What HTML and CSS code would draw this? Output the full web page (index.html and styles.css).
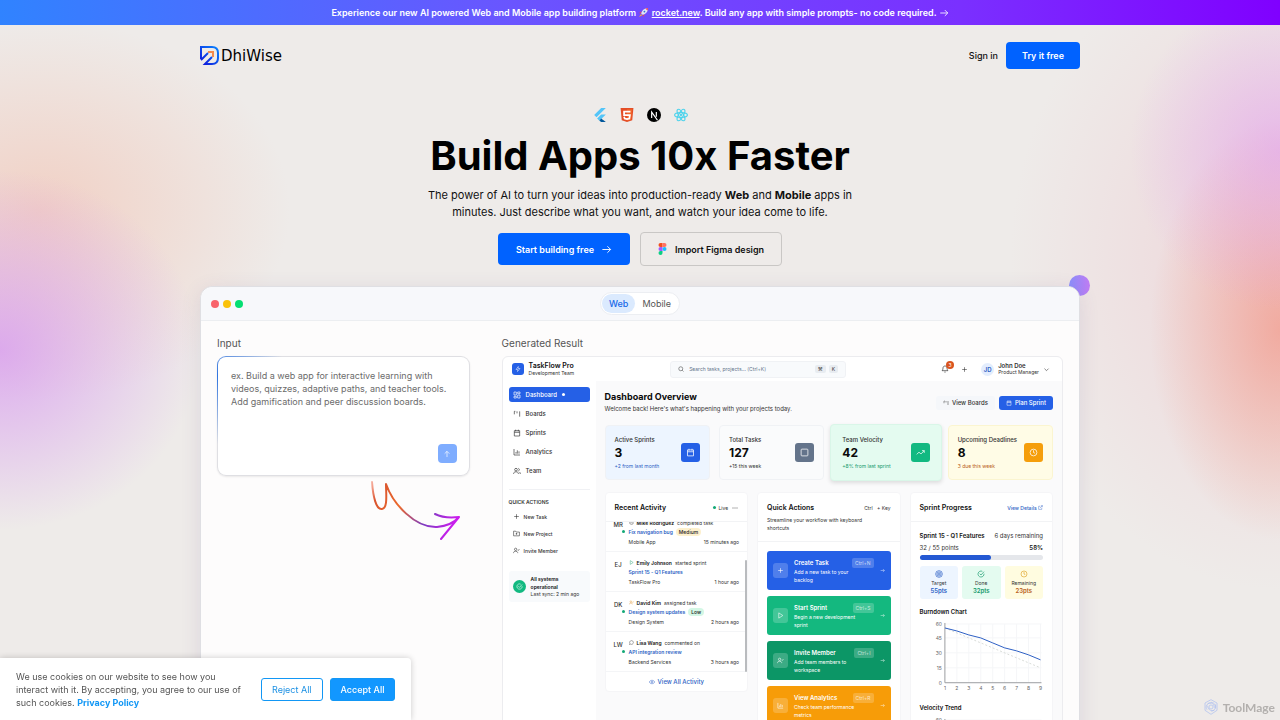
FILE: index.html
```html
<!DOCTYPE html>
<html lang="en">
<head>
  <meta charset="UTF-8">
  <meta name="viewport" content="width=device-width, initial-scale=1.0">
  <title>DhiWise - Build Apps 10x Faster</title>
  <link rel="stylesheet" href="styles.css">
</head>
<body>
  <!-- Shared icons -->
  <svg class="sprite" aria-hidden="true">
    <symbol id="arrow" viewBox="0 0 24 24"><path d="M3 12h18M14 5l7 7-7 7"/></symbol>
    <symbol id="up" viewBox="0 0 24 24"><path d="M12 21V4M5 11l7-7 7 7"/></symbol>
    <symbol id="plus" viewBox="0 0 24 24"><path d="M12 4v16M4 12h16"/></symbol>
    <symbol id="grid" viewBox="0 0 24 24"><path d="M3 3h7v9H3zM14 3h7v5h-7zM14 12h7v9h-7zM3 16h7v5H3z"/></symbol>
    <symbol id="boards" viewBox="0 0 24 24"><path d="M4 4v9M12 4v6M20 4v16M4 4h3"/></symbol>
    <symbol id="calendar" viewBox="0 0 24 24"><path d="M4 5h16v16H4zM4 10h16M8 2v5M16 2v5"/></symbol>
    <symbol id="chart" viewBox="0 0 24 24"><path d="M3 3v18h18M9 17v-5M13 17V7M18 17v-7"/></symbol>
    <symbol id="team" viewBox="0 0 24 24"><circle cx="9" cy="8" r="4"/><path d="M2 21v-2c0-6 14-6 14 0v2M16 4c4 1 4 7 0 8M19 15c2 1 3 3 3 6"/></symbol>
    <symbol id="invite" viewBox="0 0 24 24"><circle cx="9" cy="8" r="4"/><path d="M2 21v-2c0-6 14-6 14 0v2M16 10l2 2 4-5"/></symbol>
    <symbol id="folder" viewBox="0 0 24 24"><path d="M2 4h7l2 3h11v13H2zM12 10v6M9 13h6"/></symbol>
    <symbol id="check" viewBox="0 0 24 24"><path d="M21 11a9 9 0 1 1-5-7M8 11l4 4 9-10"/></symbol>
    <symbol id="clock" viewBox="0 0 24 24"><circle cx="12" cy="12" r="9"/><path d="M12 6v6l4 2"/></symbol>
    <symbol id="target" viewBox="0 0 24 24"><circle cx="12" cy="12" r="10"/><circle cx="12" cy="12" r="6"/><circle cx="12" cy="12" r="2"/></symbol>
    <symbol id="square" viewBox="0 0 24 24"><rect x="3" y="3" width="18" height="18" rx="2"/></symbol>
    <symbol id="trend" viewBox="0 0 24 24"><path d="M2 17l6-6 5 5 9-9M16 7h6v6"/></symbol>
    <symbol id="play" viewBox="0 0 24 24"><path d="M6 3l14 9-14 9z"/></symbol>
    <symbol id="comment" viewBox="0 0 24 24"><path d="M8 20a9 9 0 1 0-4-4l-2 6z"/></symbol>
    <symbol id="eye" viewBox="0 0 24 24"><path d="M1 12c5-9 17-9 22 0-5 9-17 9-22 0z"/><circle cx="12" cy="12" r="3"/></symbol>
    <symbol id="search" viewBox="0 0 24 24"><circle cx="11" cy="11" r="8"/><path d="M17 17l5 5"/></symbol>
    <symbol id="bell" viewBox="0 0 24 24"><path d="M6 9c0-8 12-8 12 0 0 6 3 8 3 8H3s3-2 3-8M10 21c1 1 3 1 4 0"/></symbol>
    <symbol id="chevron" viewBox="0 0 24 24"><path d="M5 9l7 7 7-7"/></symbol>
    <symbol id="external" viewBox="0 0 24 24"><path d="M18 13v8H3V6h8M14 3h7v7M10 14L21 3"/></symbol>
    <symbol id="bolt" viewBox="0 0 24 24"><path d="M13 2L4 14h7l-1 8 10-12h-7z"/></symbol>
    <symbol id="dots" viewBox="0 0 24 24"><path d="M2 12h4M10 12h4M18 12h4"/></symbol>
  </svg>

  <div class="banner">
    <p>Experience our new AI powered Web and Mobile app building platform
      <svg class="rocket" viewBox="0 0 24 24"><path fill="#e4405f" d="M8 9L2 13l5 1zM15 16l-4 6-1-5z"/><path fill="#dfe6f5" d="M7 14C9 7 14 2 22 2c0 8-5 13-12 15z"/><path fill="#e4405f" d="M16 3l6-1-1 6z"/><circle cx="14" cy="10" r="2" fill="#3b6fd4"/><path fill="#ffb02e" d="M7 15l-5 7 7-4z"/></svg>
      <a href="#">rocket.new</a>. Build any app with simple prompts- no code required.
      <svg class="icon banner-arrow"><use href="#arrow"/></svg></p>
  </div>

  <header class="header">
    <a href="#" class="logo">
      <svg viewBox="0 0 19 19"><defs><linearGradient id="logoFill" x1="0" y1="1" x2="1" y2="0"><stop offset="0" stop-color="#1013d8"/><stop offset="1" stop-color="#0a84ff"/></linearGradient></defs><path d="M1 13V1h11c4 0 6 2 6 6v5c0 4-2 6-6 6H5l7-7M1 14l7-7" fill="none" stroke="url(#logoFill)" stroke-width="2"/><path d="M8 6h5v5" fill="none" stroke="#f58a4b" stroke-width="2"/></svg>
      <span>DhiWise</span>
    </a>
    <nav class="nav">
      <a href="#">Sign in</a>
      <a href="#" class="btn try">Try it free</a>
    </nav>
  </header>

  <main>
    <section class="hero">
      <div class="tech">
        <svg viewBox="0 0 24 24"><path fill="#54c5f8" d="M14 0L2 12l4 4L22 0zM14 11l-7 7 4 4 11-11z"/><path fill="#01579b" d="M11 22l3-4 8 6h-8z"/></svg>
        <svg viewBox="0 0 24 24"><path fill="#e44d26" d="M1 0h22l-2 21-9 3-9-3z"/><path fill="#f16529" d="M12 2h9l-2 18-7 2z"/><path fill="none" stroke="#fff" stroke-width="3" d="M18 6H7v6h10l-1 6-4 1-4-1-1-3"/></svg>
        <svg viewBox="0 0 24 24"><circle cx="12" cy="12" r="12"/><path fill="none" stroke="#fff" stroke-width="2" d="M8 17V7l10 14M16 7v8"/></svg>
        <svg viewBox="0 0 24 24" class="react"><ellipse cx="12" cy="12" rx="11" ry="4"/><ellipse cx="12" cy="12" rx="11" ry="4" transform="rotate(60 12 12)"/><ellipse cx="12" cy="12" rx="11" ry="4" transform="rotate(120 12 12)"/><circle cx="12" cy="12" r="1"/></svg>
      </div>
      <h1>Build Apps 10x Faster</h1>
      <p>The power of AI to turn your ideas into production-ready <b>Web</b> and <b>Mobile</b> apps in minutes. Just describe what you want, and watch your idea come to life.</p>
      <div class="hero-buttons">
        <a href="#" class="btn start">Start building free <svg class="icon"><use href="#arrow"/></svg></a>
        <a href="#" class="btn figma">
          <svg viewBox="0 0 16 24"><path fill="#f24e1e" d="M8 0H4a4 4 0 0 0 0 8h4z"/><path fill="#ff7262" d="M8 0h4a4 4 0 0 1 0 8H8z"/><path fill="#a259ff" d="M8 8H4a4 4 0 0 0 0 8h4z"/><circle cx="12" cy="12" r="4" fill="#1abcfe"/><path fill="#0acf83" d="M8 16H4a4 4 0 1 0 4 4z"/></svg>
          Import Figma design</a>
      </div>
    </section>

    <section class="showcase">
      <div class="orb"></div>
      <div class="window">
        <div class="window-bar">
          <div class="lights"><i class="red"></i><i class="yellow"></i><i class="green"></i></div>
          <div class="tabs">
            <button class="active">Web</button>
            <button>Mobile</button>
          </div>
        </div>

        <div class="window-body">
          <div class="input-side">
            <label for="prompt" class="side-label">Input</label>
            <div class="prompt-box">
              <textarea id="prompt" placeholder="ex. Build a web app for interactive learning with videos, quizzes, adaptive paths, and teacher tools. Add gamification and peer discussion boards."></textarea>
              <button class="send" aria-label="Send"><svg class="icon"><use href="#up"/></svg></button>
            </div>
            <svg class="swoosh" viewBox="0 0 100 70">
              <defs><linearGradient id="swooshFill" gradientUnits="userSpaceOnUse" x1="5" y1="0" x2="94" y2="42"><stop offset="0" stop-color="#f5512f" stop-opacity="0.2"/><stop offset="0.15" stop-color="#d9552f"/><stop offset="0.4" stop-color="#ec6a2c"/><stop offset="0.7" stop-color="#7d3cc0"/><stop offset="1" stop-color="#cf1cf0"/></linearGradient></defs>
              <path d="M7 6C8 20 11 34 17 33C23 32 21 18 21 8C28 28 50 52 72 51C82 50 89 47 94 41M70 38C78 42 86 42 94 41L76 63"/>
            </svg>
          </div>

          <div class="result-side">
            <p class="side-label">Generated Result</p>
            <div class="app">
              <div class="topbar">
                <div class="brand">
                  <span class="brand-icon"><svg class="icon"><use href="#bolt"/></svg></span>
                  <div><strong>TaskFlow Pro</strong><small>Development Team</small></div>
                </div>
                <div class="search">
                  <svg class="icon"><use href="#search"/></svg>
                  <input type="text" aria-label="Search" placeholder="Search tasks, projects... (Ctrl+K)">
                  <kbd>⌘</kbd><kbd>K</kbd>
                </div>
                <div class="user">
                  <span class="bell"><svg class="icon"><use href="#bell"/></svg><em>3</em></span>
                  <svg class="icon"><use href="#plus"/></svg>
                  <span class="avatar">JD</span>
                  <div><strong>John Doe</strong><small>Product Manager</small></div>
                  <svg class="icon"><use href="#chevron"/></svg>
                </div>
              </div>

              <div class="app-body">
                <aside class="sidebar">
                  <nav class="menu">
                    <a href="#" class="current"><svg class="icon"><use href="#grid"/></svg>Dashboard<i></i></a>
                    <a href="#"><svg class="icon"><use href="#boards"/></svg>Boards</a>
                    <a href="#"><svg class="icon"><use href="#calendar"/></svg>Sprints</a>
                    <a href="#"><svg class="icon"><use href="#chart"/></svg>Analytics</a>
                    <a href="#"><svg class="icon"><use href="#team"/></svg>Team</a>
                  </nav>
                  <div class="quick">
                    <h4>QUICK ACTIONS</h4>
                    <a href="#"><svg class="icon"><use href="#plus"/></svg>New Task</a>
                    <a href="#"><svg class="icon"><use href="#folder"/></svg>New Project</a>
                    <a href="#"><svg class="icon"><use href="#invite"/></svg>Invite Member</a>
                  </div>
                  <div class="system">
                    <span><svg class="icon"><use href="#check"/></svg></span>
                    <div><strong>All systems operational</strong><small>Last sync: 2 min ago</small></div>
                  </div>
                </aside>

                <div class="content">
                  <div class="content-head">
                    <div>
                      <h2>Dashboard Overview</h2>
                      <p>Welcome back! Here's what's happening with your projects today.</p>
                    </div>
                    <div class="head-buttons">
                      <button><svg class="icon"><use href="#boards"/></svg>View Boards</button>
                      <button class="plan"><svg class="icon"><use href="#calendar"/></svg>Plan Sprint</button>
                    </div>
                  </div>

                  <div class="stats">
                    <div class="stat blue"><div><span>Active Sprints</span><b>3</b><small>+2 from last month</small></div><i><svg class="icon"><use href="#calendar"/></svg></i></div>
                    <div class="stat gray"><div><span>Total Tasks</span><b>127</b><small>+15 this week</small></div><i><svg class="icon"><use href="#square"/></svg></i></div>
                    <div class="stat mint"><div><span>Team Velocity</span><b>42</b><small>+8% from last sprint</small></div><i><svg class="icon"><use href="#trend"/></svg></i></div>
                    <div class="stat amber"><div><span>Upcoming Deadlines</span><b>8</b><small>3 due this week</small></div><i><svg class="icon"><use href="#clock"/></svg></i></div>
                  </div>

                  <div class="panels">
                    <!-- Recent activity -->
                    <div class="panel">
                      <div class="panel-head"><h3>Recent Activity</h3><span class="live"><i></i>Live <svg class="icon"><use href="#dots"/></svg></span></div>
                      <div class="activity">
                        <div class="item">
                          <span class="who">MR</span>
                          <div>
                            <p><svg class="icon"><use href="#check"/></svg><b>Mike Rodriguez</b> completed task</p>
                            <p><a href="#">Fix navigation bug</a><mark class="medium">Medium</mark></p>
                            <p class="meta"><span>Mobile App</span><span>15 minutes ago</span></p>
                          </div>
                        </div>
                        <div class="item">
                          <span class="who off">EJ</span>
                          <div>
                            <p><svg class="icon play"><use href="#play"/></svg><b>Emily Johnson</b> started sprint</p>
                            <p><a href="#">Sprint 15 - Q1 Features</a></p>
                            <p class="meta"><span>TaskFlow Pro</span><span>1 hour ago</span></p>
                          </div>
                        </div>
                        <div class="item">
                          <span class="who">DK</span>
                          <div>
                            <p><svg class="icon assign"><use href="#invite"/></svg><b>David Kim</b> assigned task</p>
                            <p><a href="#">Design system updates</a><mark class="low">Low</mark></p>
                            <p class="meta"><span>Design System</span><span>2 hours ago</span></p>
                          </div>
                        </div>
                        <div class="item">
                          <span class="who">LW</span>
                          <div>
                            <p><svg class="icon"><use href="#comment"/></svg><b>Lisa Wang</b> commented on</p>
                            <p><a href="#">API integration review</a></p>
                            <p class="meta"><span>Backend Services</span><span>3 hours ago</span></p>
                          </div>
                        </div>
                        <div class="thumb"></div>
                      </div>
                      <a href="#" class="view-all"><svg class="icon"><use href="#eye"/></svg>View All Activity</a>
                    </div>

                    <!-- Quick actions -->
                    <div class="panel">
                      <div class="panel-head">
                        <h3>Quick Actions</h3><span><kbd>Ctrl</kbd> + Key</span>
                        <p>Streamline your workflow with keyboard shortcuts</p>
                      </div>
                      <div class="actions">
                        <button class="create"><i><svg class="icon"><use href="#plus"/></svg></i><span><b>Create Task <kbd>Ctrl+N</kbd></b><small>Add a new task to your backlog</small></span><svg class="icon"><use href="#arrow"/></svg></button>
                        <button class="sprint"><i><svg class="icon"><use href="#play"/></svg></i><span><b>Start Sprint <kbd>Ctrl+S</kbd></b><small>Begin a new development sprint</small></span><svg class="icon"><use href="#arrow"/></svg></button>
                        <button class="member"><i><svg class="icon"><use href="#invite"/></svg></i><span><b>Invite Member <kbd>Ctrl+I</kbd></b><small>Add team members to workspace</small></span><svg class="icon"><use href="#arrow"/></svg></button>
                        <button class="analytics"><i><svg class="icon"><use href="#chart"/></svg></i><span><b>View Analytics <kbd>Ctrl+R</kbd></b><small>Check team performance metrics</small></span><svg class="icon"><use href="#arrow"/></svg></button>
                      </div>
                    </div>

                    <!-- Sprint progress -->
                    <div class="panel">
                      <div class="panel-head"><h3>Sprint Progress</h3><a href="#">View Details <svg class="icon"><use href="#external"/></svg></a></div>
                      <div class="progress">
                        <p class="row name"><b>Sprint 15 - Q1 Features</b><span>6 days remaining</span></p>
                        <p class="row"><span>32 / 55 points</span><b>58%</b></p>
                        <div class="bar"><div style="width: 58%"></div></div>
                        <div class="tiles">
                          <div class="t-blue"><svg class="icon"><use href="#target"/></svg>Target<b>55pts</b></div>
                          <div class="t-green"><svg class="icon"><use href="#check"/></svg>Done<b>32pts</b></div>
                          <div class="t-amber"><svg class="icon"><use href="#clock"/></svg>Remaining<b>23pts</b></div>
                        </div>
                        <h4>Burndown Chart</h4>
                        <svg class="graph" viewBox="0 0 124 76">
                          <path class="gridlines" d="M25 5h97M25 19h97M25 34h97M25 49h97M37 5v59M49 5v59M61 5v59M73 5v59M85 5v59M97 5v59M109 5v59M121 5v59"/>
                          <path class="axis" d="M25 4v60h97"/>
                          <path class="ideal" d="M25 9L121 49"/>
                          <path class="actual" d="M25 9L37 12L49 16L61 19L73 24L85 29L97 32L109 36L121 41"/>
                          <g text-anchor="end"><text x="22" y="7">60</text><text x="22" y="21">45</text><text x="22" y="36">30</text><text x="22" y="51">15</text><text x="22" y="66">0</text></g>
                          <g text-anchor="middle"><text x="25" y="71">1</text><text x="37" y="71">2</text><text x="49" y="71">3</text><text x="61" y="71">4</text><text x="73" y="71">5</text><text x="85" y="71">6</text><text x="97" y="71">7</text><text x="109" y="71">8</text><text x="121" y="71">9</text></g>
                        </svg>
                        <h4>Velocity Trend</h4>
                        <svg class="graph" viewBox="0 0 124 76">
                          <path class="gridlines" d="M25 5h97M25 19h97M25 34h97M25 49h97"/>
                          <path class="axis" d="M25 4v60h97"/>
                          <g text-anchor="end"><text x="22" y="7">60</text><text x="22" y="21">45</text><text x="22" y="36">30</text><text x="22" y="51">15</text><text x="22" y="66">0</text></g>
                        </svg>
                      </div>
                    </div>
                  </div>
                </div>
              </div>
            </div>
          </div>
        </div>
      </div>
    </section>
  </main>

  <div class="cookies">
    <p>We use cookies on our website to see how you interact with it. By accepting, you agree to our use of such cookies. <a href="#">Privacy Policy</a></p>
    <button class="reject">Reject All</button>
    <button class="accept">Accept All</button>
  </div>

  <div class="toolmage">
    <svg viewBox="0 0 24 24"><circle cx="12" cy="12" r="3"/><path d="M12 1l9 5v11l-9 6-9-6V6zM12 5c5 0 8 5 6 9M18 8c3 5-1 10-6 10M17 17c-6 2-10-2-10-7M6 16C3 11 6 6 12 6M7 7c5-3 10 0 10 6"/></svg>
    ToolMage
  </div>
</body>
</html>
```

FILE: styles.css
```css
* {
  box-sizing: border-box;
}

body {
  margin: 0;
  font-family: Inter, "Liberation Sans", sans-serif;
  font-size: 9px;
  color: #111;
  overflow-x: hidden;
  background:
    radial-gradient(ellipse 200px 180px at 0 350px, rgba(214, 150, 240, 0.75), transparent),
    radial-gradient(ellipse 250px 190px at 40px 210px, rgba(243, 190, 172, 0.6), transparent),
    radial-gradient(ellipse 150px 160px at 100% 150px, rgba(226, 160, 240, 0.6), transparent),
    radial-gradient(ellipse 130px 210px at 100% 330px, rgba(243, 140, 120, 0.6), transparent),
    radial-gradient(ellipse 270px 330px at 100% 260px, rgba(238, 190, 200, 0.5), transparent),
    #eeebe9;
}

h1, h2, h3, h4, p {
  margin: 0;
}

a {
  color: inherit;
  text-decoration: none;
}

button {
  font-family: inherit;
  border: none;
  cursor: pointer;
}

strong, small {
  display: block;
}

.sprite {
  display: none;
}

.icon {
  width: 8px;
  height: 8px;
  flex-shrink: 0;
  fill: none;
  stroke: currentColor;
  stroke-width: 2;
}

/* Banner */
.banner {
  height: 25px;
  background: linear-gradient(90deg, #3083ff, #6a55ff 40%, #7a30ff 75%, #8000ff);
  color: white;
  font-weight: 600;
  line-height: 25px;
  text-align: center;
}

.banner a {
  text-decoration: underline;
}

.rocket {
  width: 11px;
  height: 11px;
  vertical-align: -2px;
}

.banner-arrow {
  width: 10px;
  height: 10px;
  vertical-align: -2px;
}

/* Header */
.header {
  max-width: 880px;
  margin: 0 auto;
  padding-top: 17px;
  display: flex;
  justify-content: space-between;
  align-items: center;
}

.logo {
  display: flex;
  align-items: center;
  gap: 2px;
  font-family: "DejaVu Sans", sans-serif;
  font-size: 15px;
  color: black;
}

.logo svg {
  width: 19px;
  height: 19px;
}

.nav {
  display: flex;
  align-items: center;
  gap: 8px;
  font-weight: 500;
}

.btn {
  display: flex;
  align-items: center;
  justify-content: center;
  border-radius: 4px;
  font-weight: 600;
}

.try {
  height: 27px;
  padding: 0 16px;
  background: #0062ff;
  color: white;
}

/* Hero */
.hero {
  display: flex;
  flex-direction: column;
  align-items: center;
  padding-top: 39px;
  text-align: center;
}

.tech {
  display: flex;
  gap: 13px;
}

.tech svg {
  width: 14px;
  height: 14px;
}

.react {
  fill: none;
  stroke: #4fd3ec;
  stroke-width: 2;
}

.hero h1 {
  margin-top: 10px;
  font-size: 40px;
  line-height: 48px;
  font-weight: 700;
  color: black;
}

.hero p {
  max-width: 430px;
  margin-top: 7px;
  font-size: 11px;
  line-height: 17px;
}

.hero-buttons {
  display: flex;
  align-items: center;
  gap: 10px;
  margin-top: 11px;
}

.start {
  height: 32px;
  padding: 0 18px;
  gap: 7px;
  background: #0062ff;
  color: white;
}

.start .icon {
  width: 11px;
  height: 11px;
}

.figma {
  height: 34px;
  padding: 0 17px;
  gap: 8px;
  border: 1px solid #c9c7c5;
}

.figma svg {
  width: 9px;
  height: 12px;
}

/* App window */
.showcase {
  position: relative;
  max-width: 880px;
  margin: 20px auto 0;
}

.orb {
  position: absolute;
  top: -11px;
  right: -10px;
  width: 21px;
  height: 21px;
  border-radius: 50%;
  background: linear-gradient(90deg, #8b8ffa, #c07cf3);
}

.window {
  position: relative;
  border: 1px solid #dfdfe3;
  border-radius: 12px 12px 0 0;
  background: #fdfcfc;
  box-shadow: 0 4px 20px rgba(90, 60, 120, 0.12);
}

.window-bar {
  display: grid;
  grid-template-columns: 1fr auto 1fr;
  align-items: center;
  height: 34px;
  padding: 0 10px;
  border-bottom: 1px solid #eceef1;
  border-radius: 12px 12px 0 0;
  background: #f7f8fb;
}

.lights {
  display: flex;
  gap: 4px;
}

.lights i {
  width: 8px;
  height: 8px;
  border-radius: 50%;
}

.red {
  background: #f8636b;
}

.yellow {
  background: #fac20a;
}

.green {
  background: #05df72;
}

.tabs {
  display: flex;
  padding: 1px;
  border: 1px solid #eceef2;
  border-radius: 12px;
  background: white;
}

.tabs button {
  height: 19px;
  padding: 0 7px;
  border-radius: 10px;
  background: none;
  font-size: 9px;
  color: #555;
}

.tabs .active {
  background: #dbeafe;
  color: #1668e8;
  font-weight: 500;
}

.window-body {
  display: grid;
  grid-template-columns: 9fr 20fr;
  gap: 32px;
  padding: 16px;
}

.input-side {
  display: flex;
  flex-direction: column;
}

.side-label {
  line-height: 12px;
  margin-bottom: 7px;
  font-size: 10px;
  color: #555;
}

.prompt-box {
  display: flex;
  flex-direction: column;
  height: 120px;
  padding: 12px;
  border: 1px solid transparent;
  border-radius: 9px;
  background:
    linear-gradient(white, white) padding-box,
    radial-gradient(circle 68px at 0 20px, #2f74e0, transparent) border-box,
    linear-gradient(#dfdfe3, #dfdfe3) border-box;
  box-shadow: 0 1px 2px rgba(0, 0, 0, 0.08);
}

.prompt-box textarea {
  flex: 1;
  padding: 0 0 0 1px;
  border: none;
  outline: none;
  resize: none;
  background: none;
  font-family: inherit;
  font-size: 9px;
  line-height: 13px;
  overflow: hidden;
}

.prompt-box textarea::placeholder {
  color: #6b6b6b;
}

.send {
  display: flex;
  align-items: center;
  justify-content: center;
  align-self: flex-end;
  width: 19px;
  height: 19px;
  border-radius: 4px;
  background: #7fadff;
  color: white;
}

.swoosh {
  width: 100px;
  height: 70px;
  align-self: flex-end;
  margin-right: 5px;
  fill: none;
  stroke: url(#swooshFill);
  stroke-width: 2;
  stroke-linecap: round;
  stroke-linejoin: round;
}

/* Generated dashboard */
.app {
  border: 1px solid #ececef;
  border-radius: 6px;
  background: white;
  font-size: 5px;
  color: #333;
  overflow: hidden;
}

.topbar {
  display: grid;
  grid-template-columns: 7fr 176px 9fr;
  align-items: center;
  height: 24px;
  padding: 0 12px 0 9px;
}

.brand {
  display: flex;
  align-items: center;
  gap: 5px;
}

.brand-icon {
  display: flex;
  padding: 3px;
  border-radius: 3px;
  background: #2560e6;
  color: white;
}

.brand-icon .icon {
  width: 6px;
  height: 6px;
}

.brand strong {
  font-size: 7px;
  line-height: 9px;
  font-weight: 600;
  color: #111;
}

.brand small,
.user small {
  font-size: 5px;
  line-height: 7px;
}

.search {
  display: flex;
  align-items: center;
  gap: 3px;
  height: 17px;
  padding: 0 7px;
  border: 1px solid #f0f2f5;
  border-radius: 3px;
  background: #f8fafc;
}

.search .icon {
  width: 6px;
  height: 6px;
}

.search input {
  flex: 1;
  min-width: 0;
  padding: 0 2px;
  border: none;
  background: none;
  font-family: inherit;
  font-size: 5px;
}

.search input::placeholder {
  color: #64748b;
}

.search kbd {
  padding: 1px 3px;
  border-radius: 2px;
  background: #e8ecf1;
  font-family: inherit;
  font-size: 5px;
}

.user {
  display: flex;
  align-items: center;
  justify-content: flex-end;
  gap: 4px;
}

.user strong {
  font-size: 6px;
  line-height: 7px;
  font-weight: 600;
}

.user > .icon {
  width: 7px;
  height: 7px;
}

.bell {
  position: relative;
  display: flex;
  margin-right: 8px;
}

.bell em {
  position: absolute;
  top: -4px;
  right: -5px;
  width: 8px;
  height: 8px;
  border-radius: 50%;
  background: #d9541e;
  color: white;
  font-style: normal;
  line-height: 8px;
  text-align: center;
}

.avatar {
  width: 13px;
  height: 13px;
  margin-left: 9px;
  border-radius: 50%;
  background: #e3edfd;
  color: #2c5fc4;
  font-size: 6px;
  font-weight: 600;
  line-height: 13px;
  text-align: center;
}

.app-body {
  display: grid;
  grid-template-columns: 93px 1fr;
}

.sidebar {
  padding-top: 6px;
}

.menu,
.quick {
  display: flex;
  flex-direction: column;
  margin: 0 6px;
}

.menu {
  gap: 4px;
  padding-bottom: 11px;
  border-bottom: 1px solid #f0f1f4;
}

.menu a {
  display: flex;
  align-items: center;
  gap: 5px;
  height: 15px;
  padding-left: 4px;
  border-radius: 3px;
  font-size: 6px;
  font-weight: 500;
}

.menu .current {
  background: #2560e6;
  color: white;
}

.current i {
  width: 3px;
  height: 3px;
  border-radius: 50%;
  background: white;
}

.quick {
  padding: 9px 0 5px;
}

.quick h4 {
  line-height: 7px;
  margin-bottom: 2px;
  font-size: 5px;
  font-weight: 600;
}

.quick a {
  display: flex;
  align-items: center;
  gap: 4px;
  height: 17px;
  padding-left: 4px;
  font-weight: 500;
}

.quick .icon {
  width: 7px;
  height: 7px;
}

.system {
  display: flex;
  align-items: center;
  gap: 5px;
  margin: 7px 6px 0;
  padding: 4px;
  border-radius: 3px;
  background: #f8fafc;
}

.system span {
  display: flex;
  padding: 3px;
  border-radius: 50%;
  background: #12b981;
  color: white;
}

.system .icon {
  width: 7px;
  height: 7px;
}

.system strong {
  max-width: 40px;
  line-height: 8px;
  font-weight: 600;
  color: #111;
}

.system small {
  font-size: 5px;
  line-height: 7px;
}

.content {
  padding: 9px;
  background: #fafafb;
}

.content-head {
  display: flex;
  align-items: center;
  justify-content: space-between;
}

.content-head h2 {
  font-size: 9px;
  line-height: 13px;
  font-weight: 700;
  color: #0a0a0a;
}

.content-head p {
  font-size: 6px;
  line-height: 12px;
}

.head-buttons {
  display: flex;
  gap: 4px;
}

.head-buttons button {
  display: flex;
  align-items: center;
  gap: 3px;
  height: 14px;
  padding: 0 7px;
  border-radius: 3px;
  background: #f5f7fa;
  color: #333;
  font-size: 6px;
  font-weight: 500;
}

.head-buttons .icon {
  width: 6px;
  height: 6px;
}

.head-buttons .plan {
  background: #2560e6;
  color: white;
}

.stats {
  display: grid;
  grid-template-columns: repeat(4, 1fr);
  gap: 9px;
  margin-top: 10px;
}

.stat {
  display: flex;
  align-items: center;
  justify-content: space-between;
  height: 55px;
  padding: 0 9px;
  border: 1px solid #f0f2f5;
  border-radius: 4px;
  background: #fafbfc;
}

.stat span {
  display: block;
  font-size: 6px;
  line-height: 9px;
  font-weight: 500;
  white-space: nowrap;
}

.stat b {
  display: block;
  font-size: 12px;
  line-height: 18px;
  color: #0a0a0a;
}

.stat small {
  font-size: 5px;
  line-height: 8px;
  white-space: nowrap;
}

.stat > i {
  display: flex;
  padding: 5px;
  border-radius: 3px;
  color: white;
}

.stat > i .icon {
  width: 9px;
  height: 9px;
}

.stat.blue {
  background: #edf5ff;
}

.stat.blue i {
  background: #2560e6;
}

.stat.blue small {
  color: #2c5fc4;
}

.stat.gray i {
  background: #64748b;
}

.stat.mint {
  height: 57px;
  margin: -1px -3px;
  padding: 0 11px;
  background: #e4fbf0;
  border-color: #d9f6e8;
  box-shadow: 0 2px 4px rgba(0, 0, 0, 0.12);
}

.stat.mint i {
  background: #12b981;
}

.stat.mint small {
  color: #159a6c;
}

.stat.amber {
  background: #fffce6;
  border-color: #fbf5d0;
}

.stat.amber i {
  background: #f59e0b;
}

.stat.amber small {
  color: #b8601a;
}

.panels {
  display: grid;
  grid-template-columns: repeat(3, 1fr);
  align-items: start;
  gap: 9px;
  margin-top: 12px;
}

.panel {
  border: 1px solid #f5f5f7;
  border-radius: 4px;
  background: white;
}

.panel-head {
  display: flex;
  flex-wrap: wrap;
  align-items: center;
  justify-content: space-between;
  padding: 10px 9px 9px;
  border-bottom: 1px solid #f2f3f5;
}

.panel-head h3 {
  font-size: 7px;
  line-height: 9px;
  font-weight: 600;
  color: #111;
}

.panel-head a {
  color: #2c5fc4;
  font-weight: 500;
}

.panel-head a .icon {
  width: 5px;
  height: 5px;
}

.panel-head p {
  width: 100%;
  margin-top: 4px;
  padding-right: 16px;
  line-height: 8px;
}

.panel-head kbd {
  margin-right: 3px;
  font-family: inherit;
  font-size: 5px;
}

.live {
  display: flex;
  align-items: center;
  gap: 2px;
}

.live i {
  width: 3px;
  height: 3px;
  border-radius: 50%;
  background: #12a876;
}

.live .icon {
  width: 6px;
  margin-left: 2px;
  stroke-width: 3;
}

/* The list is scrolled to its end */
.activity {
  position: relative;
  display: flex;
  flex-direction: column;
  justify-content: flex-end;
  height: 150px;
  overflow: hidden;
}

.item {
  display: flex;
  flex-shrink: 0;
  gap: 5px;
  height: 40px;
  padding: 6px 8px 0 7px;
  border-bottom: 1px solid #f4f5f7;
}

.item > div {
  flex: 1;
}

.item p {
  display: flex;
  align-items: center;
  gap: 3px;
  height: 9px;
  white-space: nowrap;
}

.item .icon {
  width: 5px;
  height: 5px;
}

.item b {
  font-weight: 600;
  color: #111;
}

.item a {
  color: #2c5fc4;
  font-weight: 600;
}

.item .meta {
  justify-content: space-between;
  margin-top: 1px;
}

.item .play {
  color: #1d9b6c;
}

.item .assign {
  color: #e0922a;
}

.who {
  position: relative;
  width: 11px;
  height: 14px;
  font-size: 6px;
  font-weight: 500;
  line-height: 14px;
  text-align: center;
}

.who::after {
  content: "";
  position: absolute;
  right: -1px;
  bottom: -1px;
  width: 3px;
  height: 3px;
  border-radius: 50%;
  background: #12a876;
}

.who.off::after {
  display: none;
}

mark {
  padding: 1px 3px;
  border-radius: 4px;
  color: #222;
  font-weight: 500;
}

.medium {
  background: #fdf0cd;
}

.low {
  background: #d3f7e5;
}

.thumb {
  position: absolute;
  right: 0;
  bottom: 0;
  width: 2px;
  height: 112px;
  border-radius: 1px;
  background: #b9bbbe;
}

.view-all {
  display: flex;
  align-items: center;
  justify-content: center;
  gap: 3px;
  height: 19px;
  color: #2c5fc4;
  font-size: 6px;
  font-weight: 500;
}

.view-all .icon {
  width: 6px;
}

.actions {
  display: flex;
  flex-direction: column;
  gap: 6px;
  padding: 9px;
}

.actions button {
  display: flex;
  align-items: center;
  gap: 6px;
  height: 39px;
  padding: 0 6px;
  border-radius: 3px;
  color: white;
  font-size: 5px;
  text-align: left;
}

.actions i {
  display: flex;
  padding: 4px;
  border-radius: 3px;
  background: rgba(255, 255, 255, 0.2);
}

.actions i .icon {
  width: 7px;
  height: 7px;
}

.actions > button > .icon {
  width: 5px;
  height: 5px;
}

.actions span {
  flex: 1;
}

.actions small {
  padding-right: 10px;
  font-size: 5px;
  line-height: 8px;
}

.actions b {
  display: flex;
  align-items: center;
  justify-content: space-between;
  line-height: 10px;
  font-size: 6px;
  font-weight: 600;
}

.actions kbd {
  padding: 0 3px;
  border-radius: 2px;
  background: rgba(255, 255, 255, 0.2);
  color: rgba(255, 255, 255, 0.7);
  font-family: inherit;
  font-size: 5px;
  font-weight: 400;
}

.create {
  background: #2560e6;
}

.sprint {
  background: #14b87f;
}

.member {
  background: #0c9666;
}

.analytics {
  background: #f79c08;
}

.progress {
  padding: 9px;
}

.row {
  display: flex;
  justify-content: space-between;
  font-size: 6px;
  line-height: 9px;
  white-space: nowrap;
}

.row.name {
  margin-bottom: 3px;
}

.row b {
  font-weight: 600;
  color: #111;
}

.bar {
  height: 5px;
  margin-top: 3px;
  border-radius: 3px;
  background: #e5e7eb;
}

.bar div {
  height: 100%;
  border-radius: 3px;
  background: #2459d3;
}

.tiles {
  display: grid;
  grid-template-columns: repeat(3, 1fr);
  gap: 4px;
  margin-top: 6px;
}

.tiles div {
  display: flex;
  flex-direction: column;
  align-items: center;
  padding: 4px 0;
  border-radius: 3px;
  line-height: 7px;
}

.tiles b {
  font-size: 6px;
  font-weight: 600;
  line-height: 8px;
}

.tiles .icon {
  margin-bottom: 2px;
}

.t-blue {
  background: #edf5ff;
}

.t-blue b,
.t-blue .icon {
  color: #2c5fc4;
}

.t-green {
  background: #e4fbf0;
}

.t-green b,
.t-green .icon {
  color: #159a6c;
}

.t-amber {
  background: #fffce0;
}

.t-amber b {
  color: #b8601a;
}

.t-amber .icon {
  color: #e0a52a;
}

.progress h4 {
  margin: 8px 0 3px;
  font-size: 6px;
  line-height: 9px;
  font-weight: 600;
  color: #111;
}

.graph {
  display: block;
  width: 100%;
}

.graph text {
  font-size: 5px;
  fill: #666;
}

.graph path {
  fill: none;
  stroke-width: 1;
}

.graph .gridlines {
  stroke: #f5f6f8;
}

.graph .axis {
  stroke: #9a9ca0;
}

.graph .ideal {
  stroke: #d9dcd8;
  stroke-dasharray: 2 2;
}

.graph .actual {
  stroke: #2c5fc4;
}

/* Cookie notice */
.cookies {
  position: fixed;
  left: 0;
  bottom: 0;
  display: flex;
  align-items: center;
  gap: 7px;
  padding: 12px 16px 11px;
  border-radius: 0 4px 0 0;
  background: white;
  box-shadow: 0 0 6px rgba(0, 0, 0, 0.2);
}

.cookies p {
  width: 238px;
  padding-right: 7px;
  font-size: 9px;
  line-height: 13px;
  color: #555;
}

.cookies a {
  color: #1297f5;
  font-weight: 700;
}

.cookies button {
  height: 23px;
  padding: 0 10px;
  border: 1px solid #1297f5;
  border-radius: 3px;
  font-size: 9px;
}

.reject {
  background: white;
  color: #1a8fe3;
}

.cookies .accept {
  background: #1297ff;
  color: white;
  font-weight: 500;
}

.toolmage {
  position: fixed;
  right: 5px;
  bottom: 5px;
  display: flex;
  align-items: center;
  gap: 4px;
  font-family: Lato, sans-serif;
  font-size: 12px;
  font-weight: 700;
  color: #b3b0ae;
}

.toolmage svg {
  width: 16px;
  height: 16px;
  fill: none;
  stroke: #a9bcf0;
  stroke-width: 1;
}
```
